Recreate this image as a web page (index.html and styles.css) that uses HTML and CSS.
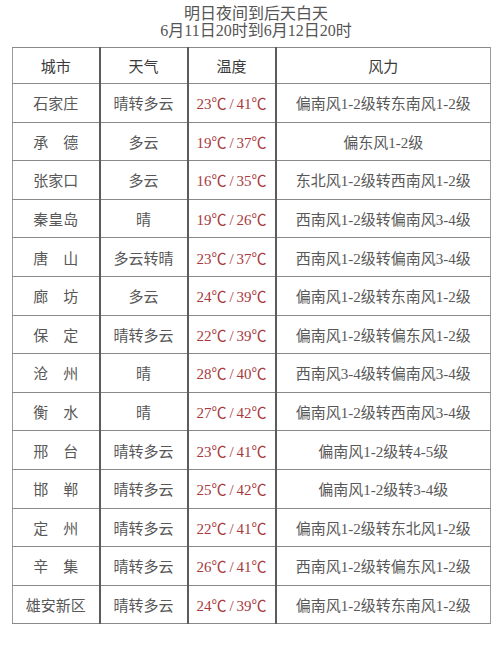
FILE: index.html
```html
<!DOCTYPE html>
<html lang="zh">
<head>
<meta charset="utf-8">
<link rel="stylesheet" href="styles.css">
</head>
<body>
<div class="page">
  <div class="title">
    <div>明日夜间到后天白天</div>
    <div>6月11日20时到6月12日20时</div>
  </div>
  <table class="wx">
    <colgroup>
      <col class="c1"><col class="c2"><col class="c3"><col class="c4">
    </colgroup>
    <thead>
      <tr><th>城市</th><th>天气</th><th>温度</th><th>风力</th></tr>
    </thead>
    <tbody>
      <tr><td>石家庄</td><td>晴转多云</td><td class="t">23<span class="d">℃</span><span class="s">/</span>41<span class="d">℃</span></td><td>偏南风1-2级转东南风1-2级</td></tr>
      <tr><td>承　德</td><td>多云</td><td class="t">19<span class="d">℃</span><span class="s">/</span>37<span class="d">℃</span></td><td>偏东风1-2级</td></tr>
      <tr><td>张家口</td><td>多云</td><td class="t">16<span class="d">℃</span><span class="s">/</span>35<span class="d">℃</span></td><td>东北风1-2级转西南风1-2级</td></tr>
      <tr><td>秦皇岛</td><td>晴</td><td class="t">19<span class="d">℃</span><span class="s">/</span>26<span class="d">℃</span></td><td>西南风1-2级转偏南风3-4级</td></tr>
      <tr><td>唐　山</td><td>多云转晴</td><td class="t">23<span class="d">℃</span><span class="s">/</span>37<span class="d">℃</span></td><td>西南风1-2级转偏南风3-4级</td></tr>
      <tr><td>廊　坊</td><td>多云</td><td class="t">24<span class="d">℃</span><span class="s">/</span>39<span class="d">℃</span></td><td>偏南风1-2级转东南风1-2级</td></tr>
      <tr><td>保　定</td><td>晴转多云</td><td class="t">22<span class="d">℃</span><span class="s">/</span>39<span class="d">℃</span></td><td>偏南风1-2级转偏东风1-2级</td></tr>
      <tr><td>沧　州</td><td>晴</td><td class="t">28<span class="d">℃</span><span class="s">/</span>40<span class="d">℃</span></td><td>西南风3-4级转偏南风3-4级</td></tr>
      <tr><td>衡　水</td><td>晴</td><td class="t">27<span class="d">℃</span><span class="s">/</span>42<span class="d">℃</span></td><td>偏南风1-2级转西南风3-4级</td></tr>
      <tr><td>邢　台</td><td>晴转多云</td><td class="t">23<span class="d">℃</span><span class="s">/</span>41<span class="d">℃</span></td><td>偏南风1-2级转4-5级</td></tr>
      <tr><td>邯　郸</td><td>晴转多云</td><td class="t">25<span class="d">℃</span><span class="s">/</span>42<span class="d">℃</span></td><td>偏南风1-2级转3-4级</td></tr>
      <tr><td>定　州</td><td>晴转多云</td><td class="t">22<span class="d">℃</span><span class="s">/</span>41<span class="d">℃</span></td><td>偏南风1-2级转东北风1-2级</td></tr>
      <tr><td>辛　集</td><td>晴转多云</td><td class="t">26<span class="d">℃</span><span class="s">/</span>41<span class="d">℃</span></td><td>西南风1-2级转偏东风1-2级</td></tr>
      <tr><td>雄安新区</td><td>晴转多云</td><td class="t">24<span class="d">℃</span><span class="s">/</span>39<span class="d">℃</span></td><td>偏南风1-2级转东南风1-2级</td></tr>
    </tbody>
  </table>
</div>
</body>
</html>
```
FILE: styles.css
```css
html, body {
  margin: 0;
  padding: 0;
  background: #fff;
}
body {
  font-family: "Liberation Serif", "Noto Sans CJK SC", serif;
  color: #585858;
}
.page {
  padding: 5px 10px 0 12px;
}
.title {
  text-align: center;
  font-size: 16px;
  line-height: 17px;
  color: #555;
  padding-left: 10px;
}
.wx {
  margin-top: 8px;
  width: 478px;
  border-collapse: collapse;
  table-layout: fixed;
  font-size: 15px;
}
.c1 { width: 87px; }
.c2 { width: 88px; }
.c3 { width: 88px; }
.c4 { width: 215px; }
.wx th, .wx td {
  text-align: center;
  padding: 0;
  border-top: 1px solid #8a8a8a;
  border-bottom: 1px solid #8a8a8a;
  border-left: 2px solid #5c5c5c;
  border-right: 2px solid #5c5c5c;
  white-space: nowrap;
}
.wx th:first-child, .wx td:first-child { border-left: 1px solid #9a9a9a; }
.wx th:last-child, .wx td:last-child { border-right: 1px solid #9a9a9a; }
.wx th {
  height: 35px;
  font-weight: normal;
  color: #3a3a3a;
}
.wx td {
  height: 37.6px;
}
.wx td.t {
  color: #a83a3e;
}
.d {
  font-family: "Noto Sans CJK SC", sans-serif;
}
.s {
  margin: 0 3px;
}
```
